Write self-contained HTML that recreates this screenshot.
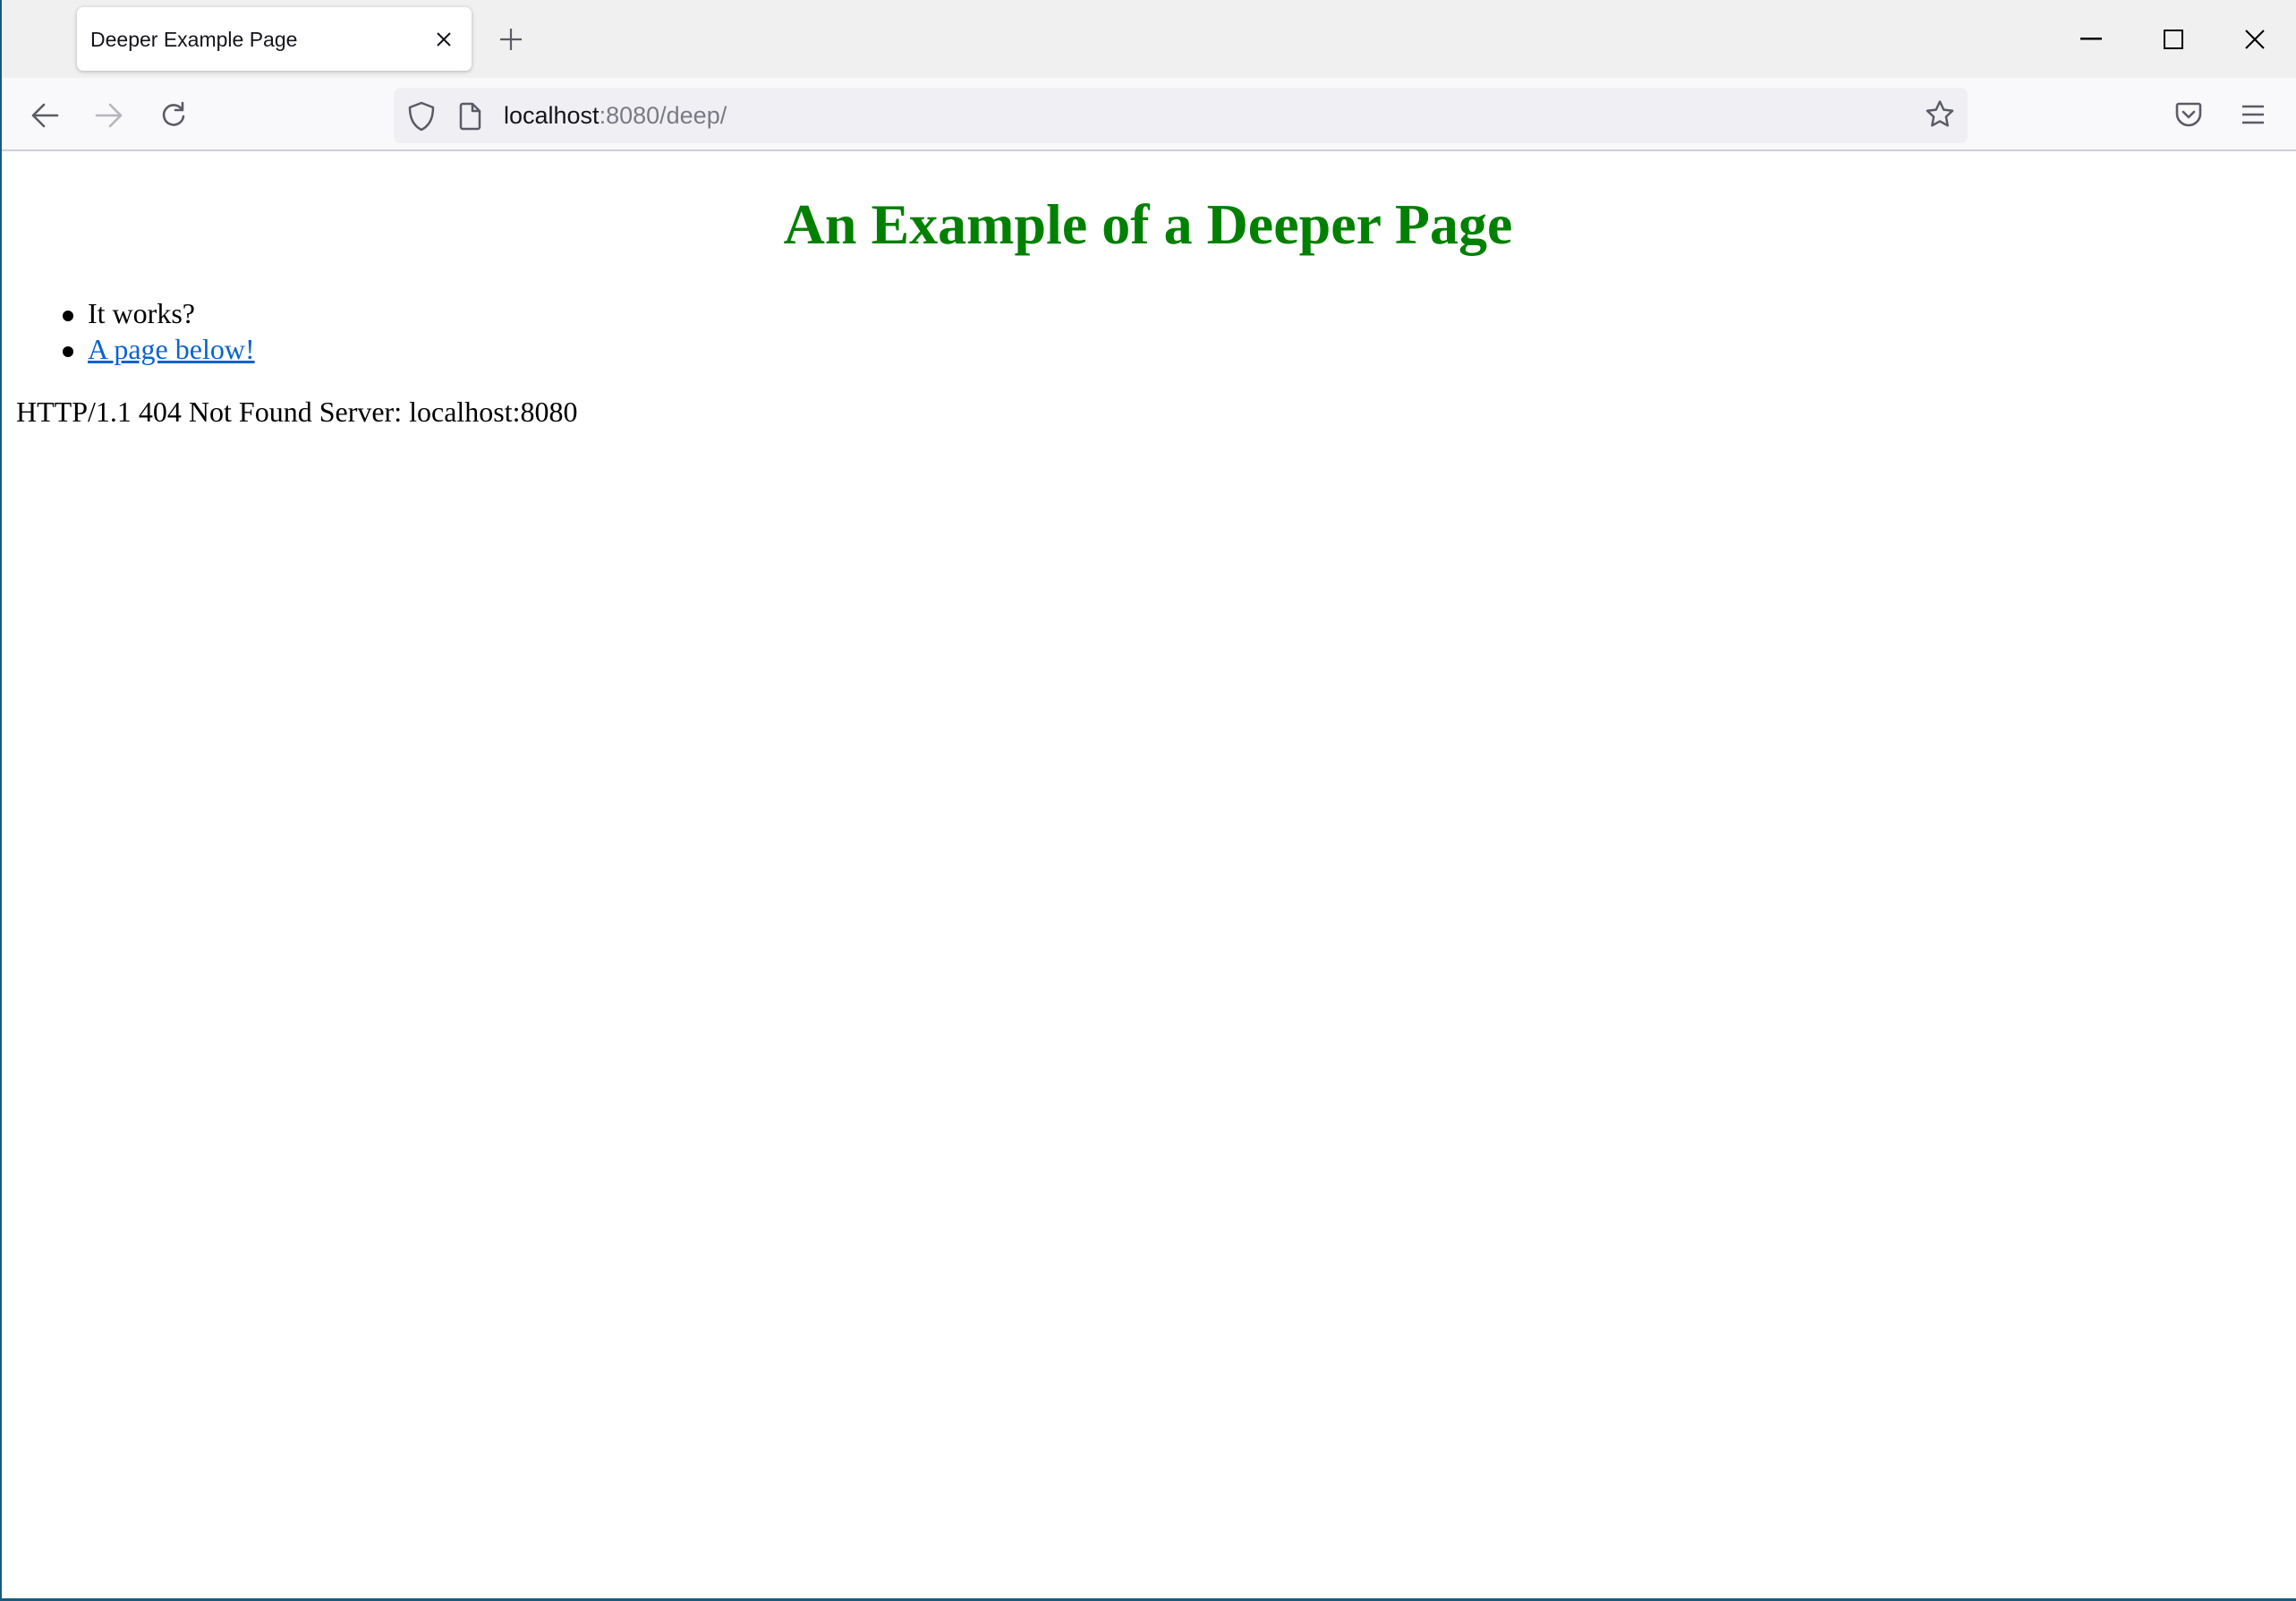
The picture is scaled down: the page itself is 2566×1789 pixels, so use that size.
<!DOCTYPE html>
<html><head><meta charset="utf-8"><style>
*{margin:0;padding:0;box-sizing:border-box}
html,body{width:2566px;height:1789px;overflow:hidden;background:#fff}
body{position:relative;font-family:"Liberation Serif",serif}
.abs{position:absolute;white-space:nowrap;line-height:1}
#tabbar{position:absolute;left:0;top:0;width:2566px;height:87px;background:#f0f0f0}
#tab{position:absolute;left:86px;top:8px;width:441px;height:71px;background:#fff;border-radius:7px;box-shadow:0 1px 5px rgba(0,0,0,.25)}
#toolbar{position:absolute;left:0;top:87px;width:2566px;height:82px;background:#f9f9fb;border-bottom:2px solid #cfcfd8}
#url{position:absolute;left:440px;top:98px;width:1759px;height:62px;background:#f0f0f4;border-radius:8px}
.sans{font-family:"Liberation Sans",sans-serif}
svg{position:absolute}
#lb{position:absolute;left:0;top:0;width:2px;height:1789px;background:#1b5a7d}
#bb{position:absolute;left:0;top:1786px;width:2566px;height:3px;background:#1b5a7d}
</style></head><body>
<div id="tabbar"></div>
<div id="tab"></div>
<div class="abs sans" style="left:101px;top:33px;font-size:23px;color:#15141a">Deeper Example Page</div>
<svg style="left:487px;top:35px" width="18" height="18" viewBox="0 0 18 18"><path d="M2 2L16 16M16 2L2 16" stroke="#15141a" stroke-width="2"/></svg>
<svg style="left:558px;top:31px" width="26" height="26" viewBox="0 0 26 26"><path d="M13 1V25M1 13H25" stroke="#5b5b66" stroke-width="2.2"/></svg>
<svg style="left:2325px;top:42px" width="24" height="4"><rect width="24" height="2.5" fill="#000"/></svg>
<svg style="left:2418px;top:33px" width="22" height="22"><rect x="1" y="1" width="20" height="20" fill="none" stroke="#000" stroke-width="2"/></svg>
<svg style="left:2509px;top:33px" width="22" height="22"><path d="M1 1L21 21M21 1L1 21" stroke="#000" stroke-width="2"/></svg>
<div id="toolbar"></div>
<div id="url"></div>
<svg style="left:34px;top:114px" width="32" height="30" viewBox="0 0 32 30"><path d="M30 15H3M15 3L3 15L15 27" fill="none" stroke="#5b5b66" stroke-width="2.6" stroke-linejoin="round" stroke-linecap="round"/></svg>
<svg style="left:106px;top:114px" width="32" height="30" viewBox="0 0 32 30"><path d="M2 15H29M17 3L29 15L17 27" fill="none" stroke="#b5b5bb" stroke-width="2.6" stroke-linejoin="round" stroke-linecap="round"/></svg>
<svg style="left:178px;top:113px" width="32" height="32" viewBox="0 0 32 32"><path d="M25 9A11 11 0 1 0 27 17" fill="none" stroke="#5b5b66" stroke-width="2.6" stroke-linecap="round"/><path d="M26 2V10H18" fill="none" stroke="#5b5b66" stroke-width="2.6" stroke-linecap="round" stroke-linejoin="round"/></svg>
<svg style="left:456px;top:113px" width="30" height="34" viewBox="0 0 30 34"><path d="M15 2L28 7C28 20 23 28 15 32C7 28 2 20 2 7Z" fill="none" stroke="#5b5b66" stroke-width="2.5" stroke-linejoin="round"/></svg>
<svg style="left:513px;top:114px" width="26" height="32" viewBox="0 0 26 32"><path d="M4 2H15L23 10V28A2 2 0 0 1 21 30H4A2 2 0 0 1 2 28V4A2 2 0 0 1 4 2ZM15 2V10H23" fill="none" stroke="#5b5b66" stroke-width="2.5" stroke-linejoin="round"/></svg>
<div class="abs sans" style="left:563px;top:116px;font-size:27px;color:#15141a">localhost<span style="color:#7a7a84">:8080/deep/</span></div>
<svg style="left:2151px;top:111px" width="34" height="34" viewBox="0 0 34 34"><path d="M17 2.5L21.3 11.6L31 12.8L23.9 19.5L25.7 29.3L17 24.5L8.3 29.3L10.1 19.5L3 12.8L12.7 11.6Z" fill="none" stroke="#5b5b66" stroke-width="2.5" stroke-linejoin="round"/></svg>
<svg style="left:2431px;top:114px" width="30" height="30" viewBox="0 0 30 30"><path d="M4 2H26A2 2 0 0 1 28 4V13A13 13 0 0 1 2 13V4A2 2 0 0 1 4 2Z" fill="none" stroke="#5b5b66" stroke-width="2.6"/><path d="M9 11L15 17L21 11" fill="none" stroke="#5b5b66" stroke-width="2.6" stroke-linecap="round" stroke-linejoin="round"/></svg>
<svg style="left:2505px;top:117px" width="26" height="22" viewBox="0 0 26 22"><path d="M1 2H25M1 11H25M1 20H25" stroke="#5b5b66" stroke-width="2.4"/></svg>

<div class="abs" style="left:0;width:2566px;text-align:center;top:219px;font-size:64px;font-weight:bold;color:#008000">An Example of a Deeper Page</div>
<div class="abs" style="left:70px;top:347px;width:12px;height:12px;border-radius:50%;background:#000"></div>
<div class="abs" style="left:98px;top:334px;font-size:32px;color:#000">It works?</div>
<div class="abs" style="left:70px;top:387px;width:12px;height:12px;border-radius:50%;background:#000"></div>
<div class="abs" style="left:98px;top:374px;font-size:32px;color:#0b63ce;text-decoration:underline">A page below!</div>
<div class="abs" style="left:18px;top:444px;font-size:32px;color:#000">HTTP/1.1 404 Not Found Server: localhost:8080</div>
<div id="lb"></div><div id="bb"></div>
</body></html>
